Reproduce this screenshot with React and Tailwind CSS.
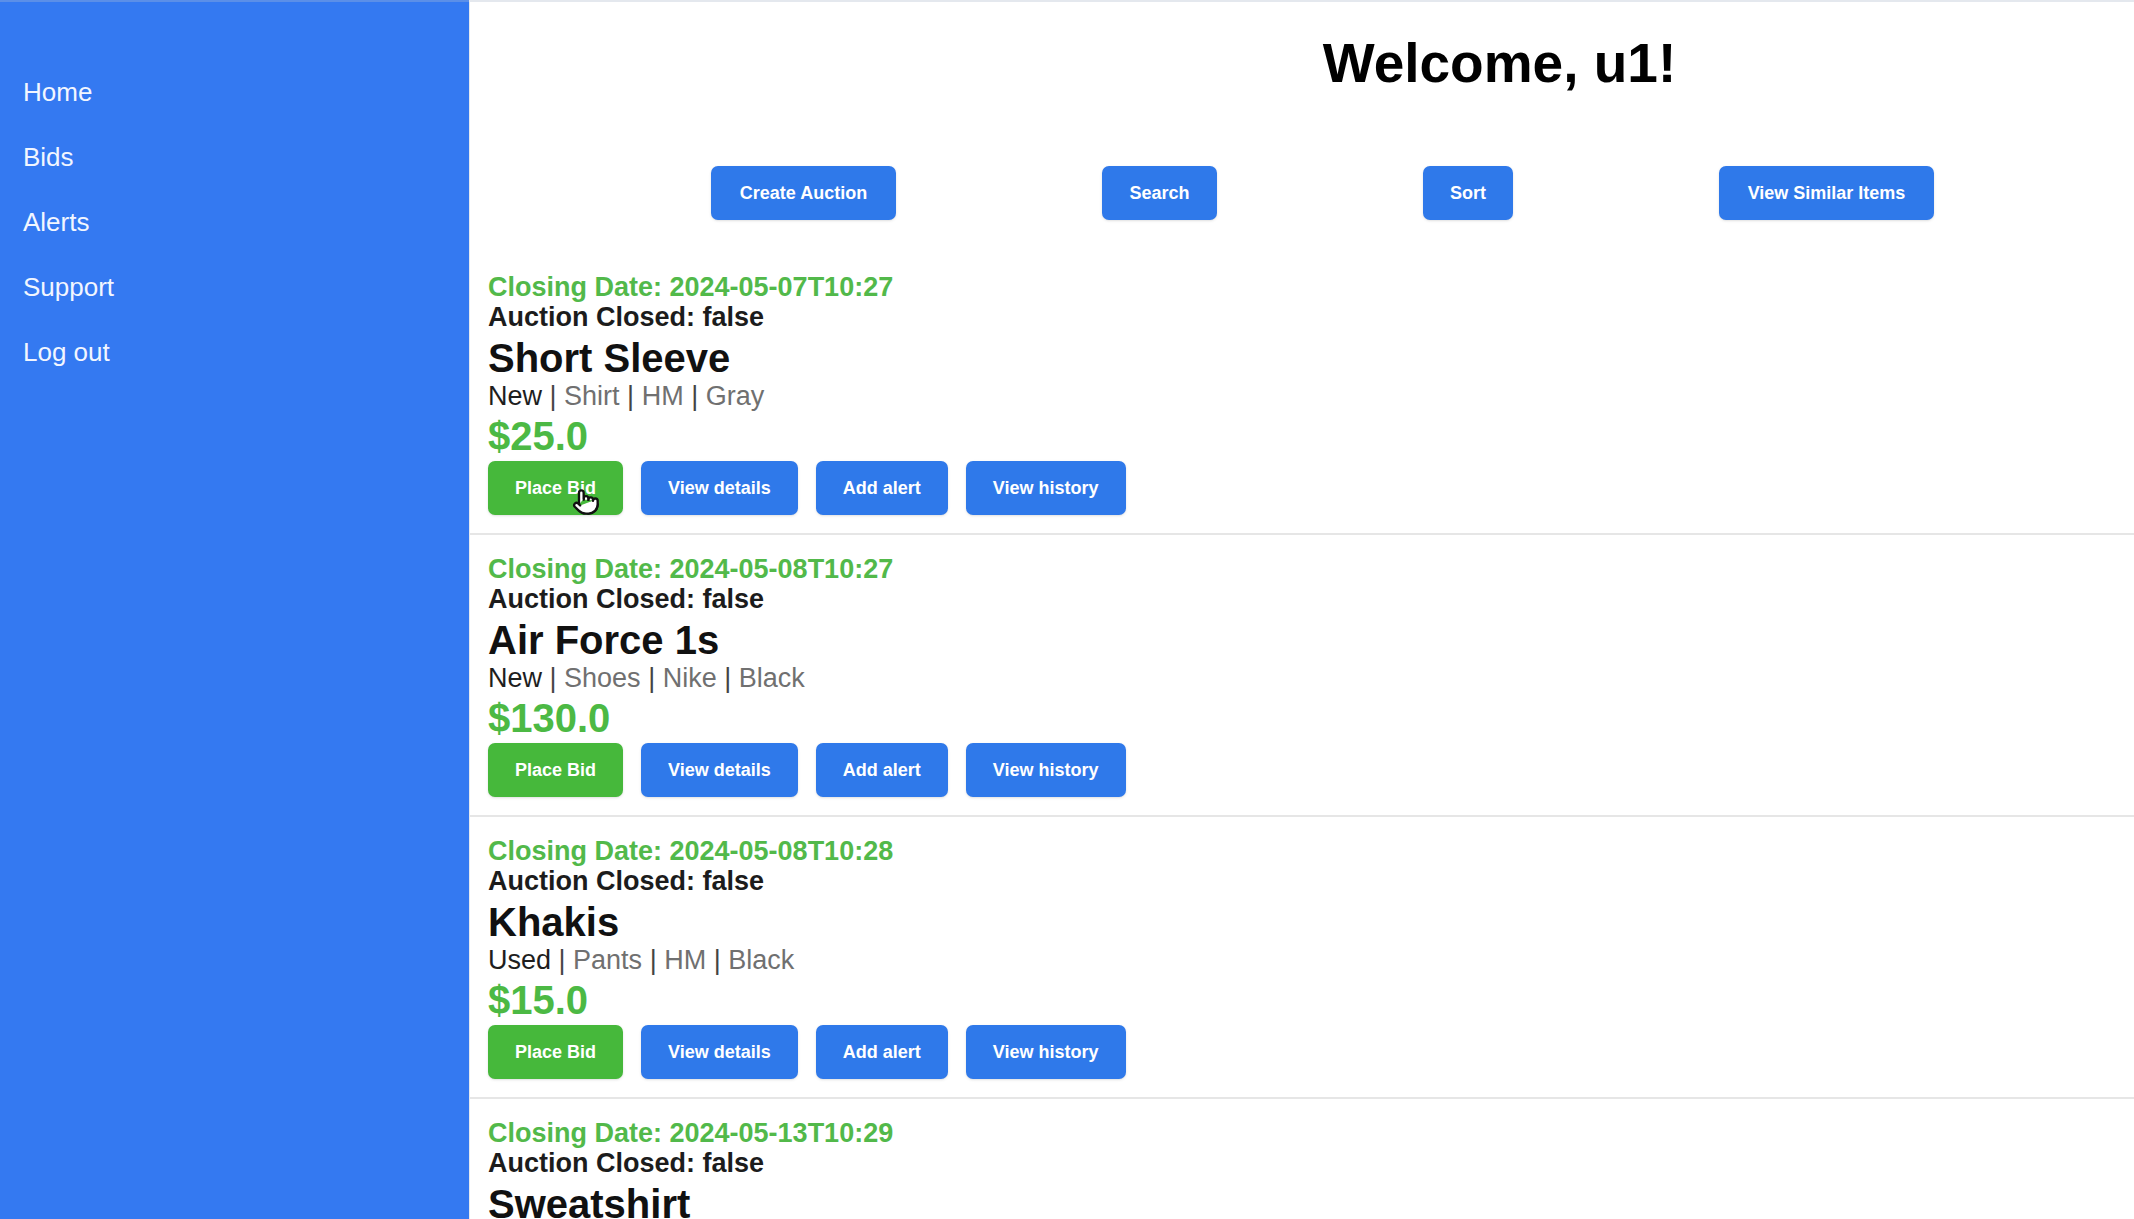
import React from "react";
import { Pointer } from "lucide-react";

const items = [
  { date: "2024-05-07T10:27", name: "Short Sleeve", cond: "New", rest: ["Shirt", "HM", "Gray"], price: "$25.0" },
  { date: "2024-05-08T10:27", name: "Air Force 1s", cond: "New", rest: ["Shoes", "Nike", "Black"], price: "$130.0" },
  { date: "2024-05-08T10:28", name: "Khakis", cond: "Used", rest: ["Pants", "HM", "Black"], price: "$15.0" },
  { date: "2024-05-13T10:29", name: "Sweatshirt", cond: "New", rest: ["Shirt", "HM", "Gray"], price: "$40.0" },
];

function Btn({ children, green, className = "px-[27px]" }) {
  return (
    <button
      className={
        "h-[54px] rounded-[7px] text-[18px] font-bold text-white shadow-sm whitespace-nowrap text-center " +
        className +
        " " +
        (green ? "bg-[#46b83b]" : "bg-[#2f79ea]")
      }
    >
      {children}
    </button>
  );
}

export default function App() {
  return (
    <div
      className="flex h-[1219px] w-[2134px] overflow-hidden bg-white"
      style={{ fontFamily: '"Liberation Sans", Arial, sans-serif' }}
    >
      <aside className="w-[469px] shrink-0 bg-[#3479f1] pt-[58px] pl-[23px] border-t-2 border-[#5b8fe8]">
        {["Home", "Bids", "Alerts", "Support", "Log out"].map((t) => (
          <div key={t} className="text-[26px] leading-[65px] text-[#f2f6ff]">
            {t}
          </div>
        ))}
      </aside>
      <main className="flex-1 min-w-0 border-t-2 border-l border-[#e4e8ee]">
        <h1 className="pt-[30px] pl-[395px] text-center text-[55px] leading-[62px] font-bold text-black">
          Welcome, u1!
        </h1>
        <div className="mt-[72px] flex gap-[206px] pl-[241px]">
          <Btn className="w-[185px]">Create Auction</Btn>
          <Btn className="w-[115px]">Search</Btn>
          <Btn className="w-[90px]">Sort</Btn>
          <Btn className="w-[215px]">View Similar Items</Btn>
        </div>
        <div className="mt-[33px]">
          {items.map((it, i) => (
            <div key={i} className="px-[18px] pt-[19px] pb-[18px] border-b-2 border-[#e6e6e6]">
              <div className="text-[27px] leading-[30px] font-bold text-[#52b94a]">
                Closing Date: {it.date}
              </div>
              <div className="text-[27px] leading-[30px] font-bold text-[#1c1c1c]">
                Auction Closed: false
              </div>
              <div className="mt-[3px] text-[40px] leading-[46px] font-bold text-[#111]">{it.name}</div>
              <div className="text-[27px] leading-[30px] text-[#707070]">
                <span className="text-[#1e1e1e]">{it.cond}</span>
                {it.rest.map((r) => (
                  <span key={r}>
                    {" "}
                    <span className="text-[#444]">|</span> {r}
                  </span>
                ))}
              </div>
              <div className="text-[40px] leading-[50px] font-bold text-[#4cb944]">{it.price}</div>
              <div className="flex gap-[18px]">
                <div className="relative">
                  <Btn green>Place Bid</Btn>
                  {i === 0 && (
                    <Pointer
                      size={28}
                      strokeWidth={2}
                      color="#111"
                      fill="#fff"
                      className="absolute left-[84px] top-[27px]"
                    />
                  )}
                </div>
                <Btn>View details</Btn>
                <Btn>Add alert</Btn>
                <Btn>View history</Btn>
              </div>
            </div>
          ))}
        </div>
      </main>
    </div>
  );
}
